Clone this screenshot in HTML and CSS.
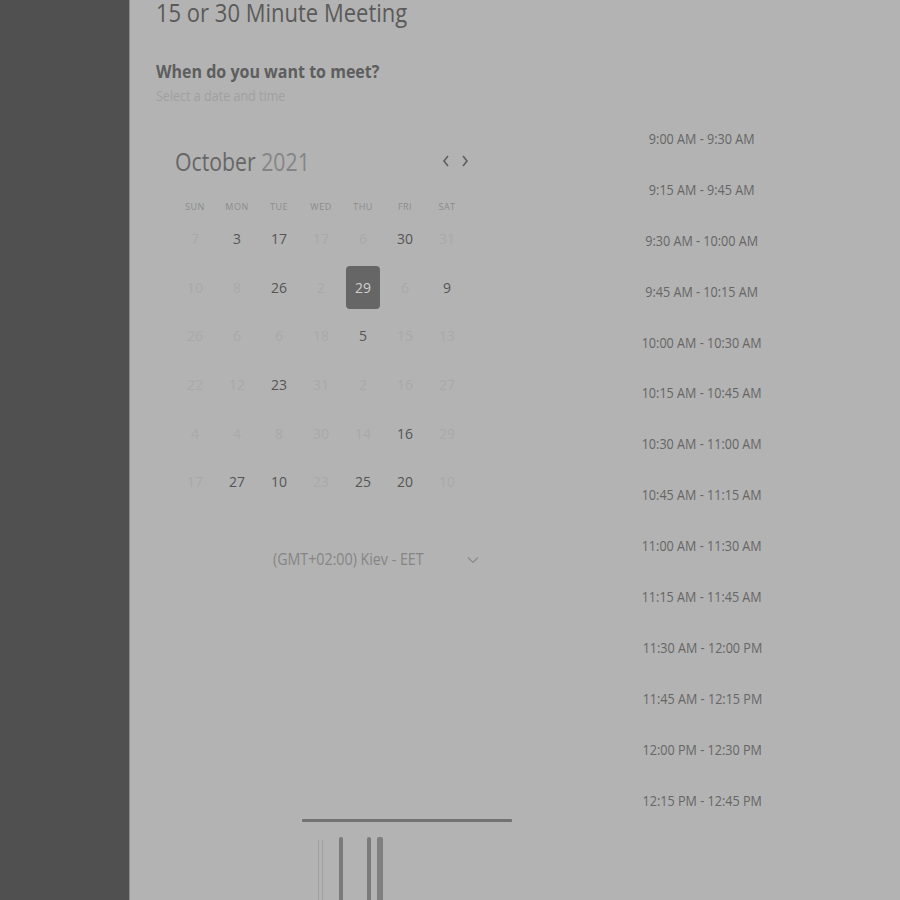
FILE: index.html
```html
<!DOCTYPE html>
<html>
<head>
<meta charset="utf-8">
<link rel="stylesheet" href="styles.css">
</head>
<body>
<div class="app">
  <aside class="sidebar"></aside>
  <main class="main">
    <h1 class="title">15 or 30 Minute Meeting</h1>
    <h2 class="question">When do you want to meet?</h2>
    <p class="hint">Select a date and time</p>
    <div class="columns">
      <section class="calendar">
        <div class="cal-head">
          <div class="month"><span class="m">October</span> <span class="y">2021</span></div>
          <div class="nav">
            <svg width="10" height="14" viewBox="0 0 10 14"><path d="M7 2 L3 7 L7 12" fill="none" stroke="#5e5e5e" stroke-width="1.6"/></svg>
            <svg width="10" height="14" viewBox="0 0 10 14"><path d="M3 2 L7 7 L3 12" fill="none" stroke="#5e5e5e" stroke-width="1.6"/></svg>
          </div>
        </div>
        <div class="grid">
          <div class="wd">SUN</div><div class="wd">MON</div><div class="wd">TUE</div><div class="wd">WED</div><div class="wd">THU</div><div class="wd">FRI</div><div class="wd">SAT</div>
          <div class="d off">7</div><div class="d">3</div><div class="d">17</div><div class="d off">17</div><div class="d off">6</div><div class="d">30</div><div class="d off">31</div>
          <div class="d off">10</div><div class="d off">8</div><div class="d">26</div><div class="d off">2</div><div class="d"><span class="sel">29</span></div><div class="d off">6</div><div class="d">9</div>
          <div class="d off">26</div><div class="d off">6</div><div class="d off">6</div><div class="d off">18</div><div class="d">5</div><div class="d off">15</div><div class="d off">13</div>
          <div class="d off">22</div><div class="d off">12</div><div class="d">23</div><div class="d off">31</div><div class="d off">2</div><div class="d off">16</div><div class="d off">27</div>
          <div class="d off">4</div><div class="d off">4</div><div class="d off">8</div><div class="d off">30</div><div class="d off">14</div><div class="d">16</div><div class="d off">29</div>
          <div class="d off">17</div><div class="d">27</div><div class="d">10</div><div class="d off">23</div><div class="d">25</div><div class="d">20</div><div class="d off">10</div>
        </div>
        <div class="tz">
          <span class="tz-label">(GMT+02:00) Kiev - EET</span>
          <svg width="12" height="8" viewBox="0 0 12 8"><path d="M1 1.5 L6 6.5 L11 1.5" fill="none" stroke="#8a8a8a" stroke-width="1.2"/></svg>
        </div>
      </section>
      <section class="times">
        <div class="t">9:00 AM - 9:30 AM</div>
        <div class="t">9:15 AM - 9:45 AM</div>
        <div class="t">9:30 AM - 10:00 AM</div>
        <div class="t">9:45 AM - 10:15 AM</div>
        <div class="t">10:00 AM - 10:30 AM</div>
        <div class="t">10:15 AM - 10:45 AM</div>
        <div class="t">10:30 AM - 11:00 AM</div>
        <div class="t">10:45 AM - 11:15 AM</div>
        <div class="t">11:00 AM - 11:30 AM</div>
        <div class="t">11:15 AM - 11:45 AM</div>
        <div class="t">11:30 AM - 12:00 PM</div>
        <div class="t">11:45 AM - 12:15 PM</div>
        <div class="t">12:00 PM - 12:30 PM</div>
        <div class="t">12:15 PM - 12:45 PM</div>
      </section>
    </div>
    <div class="footer">
      <div class="bar"></div>
      <div class="ticks">
        <span class="tk faint"></span><span class="tk faint g1"></span><span class="tk dark g2"></span><span class="tk dark g3"></span><span class="tk dark g4"></span>
      </div>
    </div>
  </main>
</div>
</body>
</html>
```
FILE: styles.css
```css
* { box-sizing: border-box; }
html, body { margin: 0; padding: 0; }
body {
  width: 900px;
  height: 900px;
  overflow: hidden;
  background: #b3b3b3;
  font-family: "Open Sans", "Noto Sans", "Liberation Sans", sans-serif;
}
.app {
  display: flex;
  height: 900px;
}
.sidebar {
  width: 130px;
  flex: none;
  background: #505050;
  border-right: 1px solid #8a8a8a;
}
.main {
  flex: 1;
  padding-left: 26px;
  position: relative;
}
.title {
  margin: 0;
  font-size: 25px;
  font-weight: 400;
  color: #5a5a5a;
  line-height: 24px;
  transform: scaleX(0.88);
  transform-origin: left center;
  white-space: nowrap;
}
.question {
  margin: 35px 0 0;
  font-size: 18px;
  font-weight: 700;
  color: #5e5e5e;
  line-height: 24px;
  transform: scaleX(0.89);
  transform-origin: left center;
  white-space: nowrap;
}
.hint {
  margin: 4px 0 0;
  font-size: 14px;
  color: #a0a0a0;
  line-height: 18px;
  transform: scaleX(0.895);
  transform-origin: left center;
  white-space: nowrap;
}
.columns {
  display: flex;
  margin-top: 23px;
}
.calendar {
  width: 320px;
  flex: none;
  padding-left: 18px;
  padding-top: 17px;
}
.cal-head {
  display: flex;
  align-items: center;
  justify-content: space-between;
  width: 300px;
  padding-left: 1px;
}
.month {
  font-size: 25px;
  line-height: 32px;
  transform: scaleX(0.85);
  transform-origin: left center;
  white-space: nowrap;
}
.month .m { color: #666; }
.month .y { color: #858585; }
.nav {
  display: flex;
  gap: 9px;
  padding-right: 4px;
}
.grid {
  display: grid;
  grid-template-columns: repeat(7, 42px);
  grid-auto-rows: 48.7px;
  grid-template-rows: 14px;
  margin-top: 23px;
}
.wd {
  font-size: 9px;
  color: #8c8c8c;
  text-align: center;
  letter-spacing: 0.5px;
  line-height: 14px;
}
.d {
  display: flex;
  align-items: center;
  justify-content: center;
  font-size: 14px;
  color: #555;
}
.d.off { color: #a9a9a9; }
.sel {
  display: flex;
  align-items: center;
  justify-content: center;
  width: 34px;
  height: 43px;
  border-radius: 4px;
  background: #666;
  color: #cfcfcf;
}
.tz {
  display: flex;
  align-items: center;
  gap: 25px;
  margin-top: 42px;
  padding-left: 99px;
  font-size: 16px;
  color: #858585;
  white-space: nowrap;
}
.tz-label {
  display: inline-block;
  transform: scaleX(0.89);
  transform-origin: left center;
}
.tz svg { margin-top: 2px; flex: none; }
.times {
  margin-left: 141px;
  width: 170px;
  display: flex;
  flex-direction: column;
  align-items: center;
  margin-top: 1px;
}
.t {
  height: 50.9px;
  line-height: 20px;
  font-size: 14px;
  color: #666;
  white-space: nowrap;
  transform: scaleX(0.9);
}
.footer {
  position: absolute;
  left: 172px;
  top: 819px;
  width: 210px;
}
.bar {
  height: 3px;
  background: #727272;
  border-radius: 1px;
}
.ticks {
  position: relative;
  height: 70px;
  margin-top: 15px;
}
.tk {
  position: absolute;
  top: 3px;
  bottom: 0;
  width: 2px;
}
.tk.faint { left: 16px; background: #a0a0a0; width: 1px; }
.tk.faint.g1 { left: 20px; }
.tk.dark { background: #7a7a7a; width: 4px; top: 0; border-radius: 2px 2px 0 0; }
.tk.g2 { left: 37px; }
.tk.g3 { left: 65px; }
.tk.g4 { left: 75px; width: 6px; background: #808080; }
```
